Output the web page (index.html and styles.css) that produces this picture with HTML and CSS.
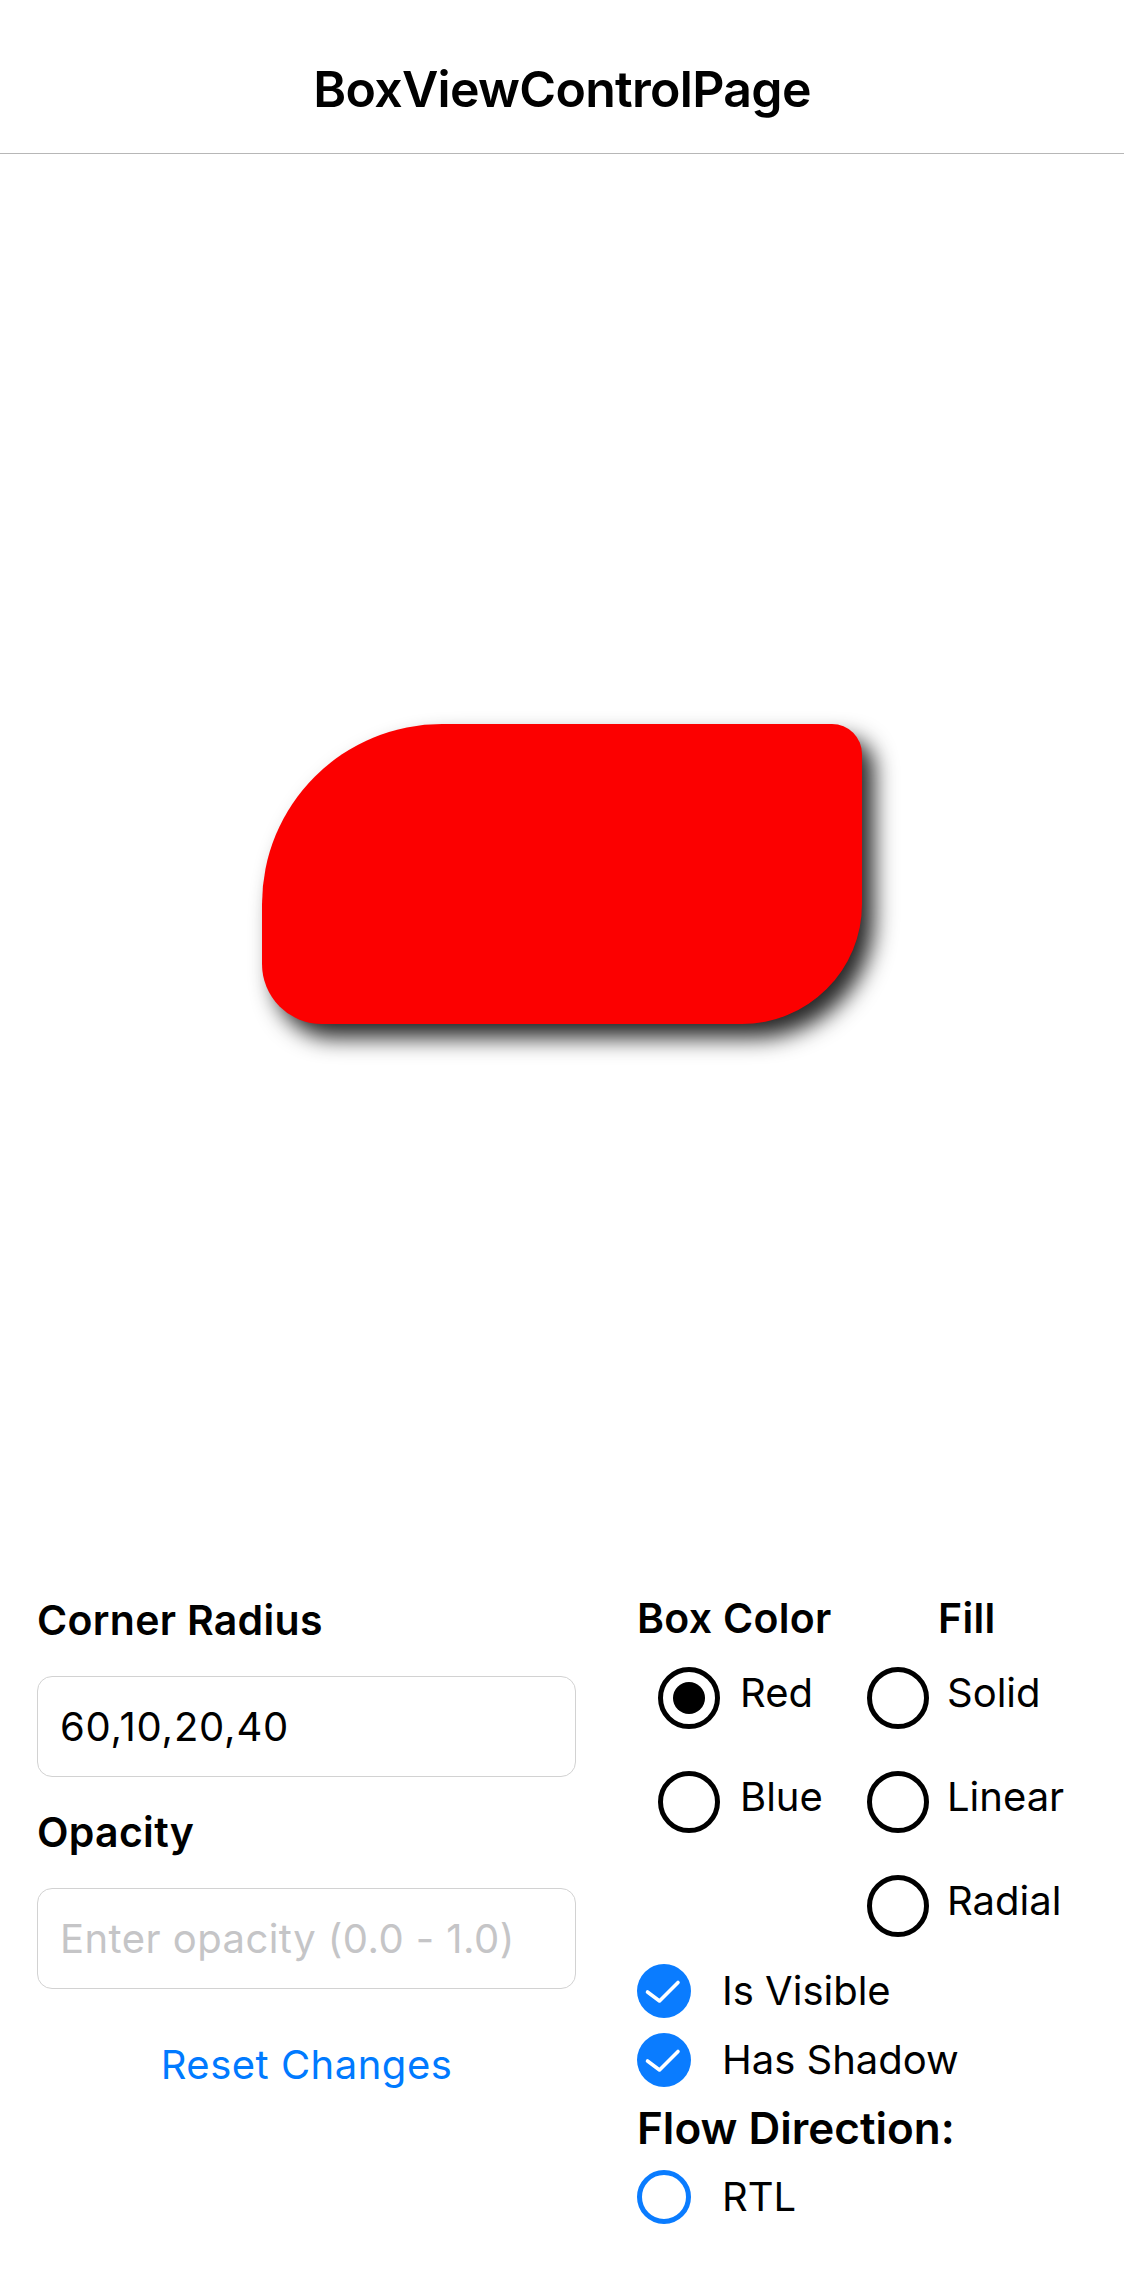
FILE: index.html
```html
<!DOCTYPE html>
<html lang="en">
<head>
<meta charset="utf-8">
<title>BoxViewControlPage</title>
<link rel="stylesheet" href="styles.css">
</head>
<body>
<header class="navbar">
  <h1 class="title">BoxViewControlPage</h1>
</header>
<main>
  <section class="stage">
    <div class="box"></div>
  </section>
  <section class="controls">
    <div class="col-left">
      <label class="field-label" for="radius">Corner Radius</label>
      <input id="radius" class="entry entry-value" type="text" value="60,10,20,40">
      <label class="field-label label-opacity" for="opacity">Opacity</label>
      <input id="opacity" class="entry" type="text" placeholder="Enter opacity (0.0 - 1.0)">
      <button class="link-btn" type="button">Reset Changes</button>
    </div>
    <div class="col-right">
      <div class="groups">
        <div class="group group-color">
          <div class="group-title">Box Color</div>
          <div class="radio-row"><span class="radio checked"></span><span class="opt">Red</span></div>
          <div class="radio-row"><span class="radio"></span><span class="opt">Blue</span></div>
        </div>
        <div class="group group-fill">
          <div class="group-title">Fill</div>
          <div class="radio-row"><span class="radio"></span><span class="opt">Solid</span></div>
          <div class="radio-row"><span class="radio"></span><span class="opt">Linear</span></div>
          <div class="radio-row"><span class="radio"></span><span class="opt">Radial</span></div>
        </div>
      </div>
      <div class="check-row">
        <span class="check"><svg viewBox="0 0 54 54" width="54" height="54"><path d="M10.5 28 L22.5 37 L41 18.5" fill="none" stroke="#fff" stroke-width="3.6" stroke-linecap="round" stroke-linejoin="round"/></svg></span>
        <span class="opt">Is Visible</span>
      </div>
      <div class="check-row">
        <span class="check"><svg viewBox="0 0 54 54" width="54" height="54"><path d="M10.5 28 L22.5 37 L41 18.5" fill="none" stroke="#fff" stroke-width="3.6" stroke-linecap="round" stroke-linejoin="round"/></svg></span>
        <span class="opt">Has Shadow</span>
      </div>
      <div class="section-title">Flow Direction:</div>
      <div class="check-row rtl-row">
        <span class="radio-blue"></span>
        <span class="opt">RTL</span>
      </div>
    </div>
  </section>
</main>
</body>
</html>
```

FILE: styles.css
```css
* { box-sizing: border-box; }

html, body {
  margin: 0;
  padding: 0;
  background: #ffffff;
}

body {
  font-family: Inter, "Noto Sans", "Liberation Sans", sans-serif;
  color: #000;
  width: 1124px;
  height: 2286px;
  overflow: hidden;
}

.navbar {
  height: 154px;
  padding-top: 58px;
  border-bottom: 1px solid #b7b7b7;
  text-align: center;
}

.title {
  margin: 0;
  font-size: 50px;
  line-height: 62px;
  font-weight: 600;
  letter-spacing: -0.7px;
}

.stage {
  height: 1440px;
  display: flex;
  align-items: center;
  justify-content: center;
}

.box {
  width: 600px;
  height: 300px;
  background: #fc0000;
  border-radius: 180px 30px 120px 60px;
  box-shadow: 12px 14px 22px rgba(0, 0, 0, 0.85);
}

.controls {
  display: grid;
  grid-template-columns: 539px 1fr;
  column-gap: 61px;
  padding-left: 37px;
}

.col-left {
  display: flex;
  flex-direction: column;
}

.field-label {
  font-size: 41px;
  line-height: 48px;
  font-weight: 600;
  letter-spacing: 0.3px;
  margin-top: 2px;
}

.label-opacity {
  margin-top: 31px;
}

.entry {
  display: block;
  width: 539px;
  height: 101px;
  margin-top: 32px;
  padding: 0 22px;
  border: 1px solid #d2d2d2;
  border-radius: 15px;
  font-family: inherit;
  font-size: 40px;
  letter-spacing: 0.45px;
  color: #000;
  background: #fff;
  outline: none;
}

.entry-value {
  letter-spacing: 0.8px;
}

.entry::placeholder {
  color: #c5c5c7;
}

.link-btn {
  margin-top: 52px;
  padding: 0;
  border: 0;
  background: none;
  font-family: inherit;
  font-size: 40px;
  line-height: 48px;
  letter-spacing: 0.5px;
  color: #007aff;
  text-align: center;
  align-self: center;
}

.col-right {
  display: flex;
  flex-direction: column;
}

.groups {
  display: grid;
  grid-template-columns: 230px 1fr;
  height: 362px;
}

.group-title {
  font-size: 41px;
  line-height: 48px;
  letter-spacing: 0.3px;
  height: 52px;
  font-weight: 600;
}

.group-color .radio-row {
  padding-left: 21px;
}

.group-fill .group-title {
  padding-left: 71px;
}

.radio-row {
  display: flex;
  align-items: center;
  height: 104px;
}

.radio {
  width: 62px;
  height: 62px;
  border: 5px solid #000;
  border-radius: 50%;
  flex: none;
  display: flex;
  align-items: center;
  justify-content: center;
}

.radio.checked::after {
  content: "";
  width: 32px;
  height: 32px;
  border-radius: 50%;
  background: #000;
}

.opt {
  font-size: 40px;
  line-height: 48px;
  margin-left: 20px;
}

.radio-row .opt {
  margin-bottom: 11px;
}

.group-fill .radio-row .opt {
  margin-left: 18px;
}

.check-row {
  display: flex;
  align-items: center;
  height: 69px;
}

.check {
  width: 54px;
  height: 54px;
  border-radius: 50%;
  background: #0a7cff;
  flex: none;
  display: block;
}

.check svg {
  display: block;
}

.check-row .opt {
  margin-left: 31px;
}

.section-title {
  margin-top: 8px;
  font-size: 44px;
  line-height: 52px;
  font-weight: 600;
}

.rtl-row {
  margin-top: 8px;
}

.radio-blue {
  width: 54px;
  height: 54px;
  border: 5px solid #0a7cff;
  border-radius: 50%;
  flex: none;
}
```
